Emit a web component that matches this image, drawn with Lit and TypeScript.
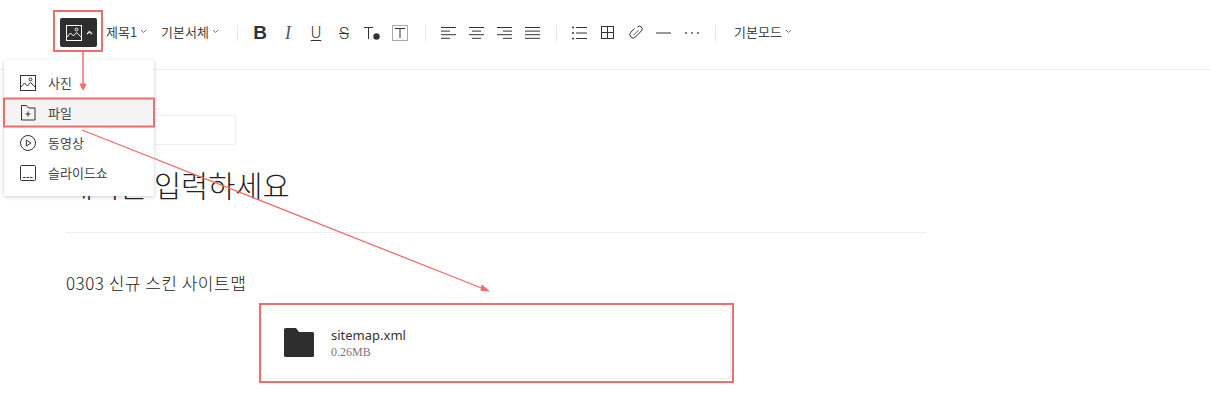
import { LitElement, html, css, svg } from "lit";
import { customElement } from "lit/decorators.js";

const chevron = html`<svg class="chev" width="7" height="5" viewBox="0 0 7 5"><path d="M1 1l2.5 2.5L6 1" fill="none" stroke="#666" stroke-width="0.9"/></svg>`;

const icon = (body: unknown, w = 16, h = 16) =>
  html`<svg class="icon" width=${w} height=${h} viewBox="0 0 ${w} ${h}" fill="none" stroke="#333" stroke-width="1">${body}</svg>`;

const imageIcon = (color: string) => html`<svg class="icon" width="16" height="16" viewBox="0 0 16 16" fill="none" stroke=${color} stroke-width="1">
  <rect x="0.5" y="0.5" width="15" height="15"/>
  <path d="M1 12l3.5-4 3 3 3-3.500 4.500 4.500"/>
  <circle cx="10.500" cy="4.500" r="1.400"/>
</svg>`;

const lines = (rows: [number, number][]) =>
  icon(rows.map(([a, b], i) => svg`<path d="M${a} ${2.5 + i * 3.6}H${b}"/>`), 16, 16);

@customElement("app-root")
export class AppRoot extends LitElement {
  static styles = css`
    :host {
      display: block;
      position: relative;
      width: 1210px;
      height: 417px;
      overflow: hidden;
      background: #fff;
      color: #222;
      font-family: "Noto Sans CJK KR", "Noto Sans", sans-serif;
    }

    .toolbar {
      display: flex;
      align-items: center;
      height: 69px;
      padding-left: 60px;
      border-bottom: 1px solid #efefef;
      font-size: 13px;
      color: #444;
    }

    .inner {
      display: flex;
      align-items: center;
      height: 29px;
      margin-top: -4px;
    }

    .img-btn {
      display: flex;
      align-items: center;
      gap: 4px;
      width: 37px;
      height: 29px;
      box-sizing: border-box;
      padding-left: 6px;
      background: #2e2e2e;
      border-radius: 2px;
    }

    .drop {
      display: flex;
      align-items: center;
      gap: 3px;
      margin-top: -2px;
      white-space: nowrap;
    }

    .chev {
      flex: none;
    }

    .heading {
      margin-left: 9px;
      width: 46px;
    }

    .font {
      margin-left: 9px;
      width: 66px;
    }

    .sep {
      width: 1px;
      height: 16px;
      background: #e6e6e6;
      flex: none;
    }

    .group {
      display: flex;
      align-items: center;
      gap: 12px;
      margin: 0 15px;
    }

    .style-group {
      margin: 0 17px 0 14px;
    }

    .mode {
      margin-left: 18px;
    }

    .icon {
      flex: none;
      display: block;
    }

    .glyph {
      width: 16px;
      text-align: center;
      line-height: 16px;
      color: #333;
    }

    .bold {
      font-family: "Liberation Sans", sans-serif;
      font-size: 19px;
      font-weight: 700;
    }

    .italic {
      font-family: "Liberation Serif", serif;
      font-size: 18px;
      font-style: italic;
      font-weight: 400;
      color: #555;
    }

    .under,
    .strike {
      font-family: Roboto, sans-serif;
      font-size: 16px;
      font-weight: 300;
    }

    .under {
      text-decoration: underline;
      text-decoration-thickness: 1px;
      text-underline-offset: 2px;
    }

    .strike {
      font-size: 17px;
      text-decoration: line-through;
      text-decoration-thickness: 1px;
    }

    .page {
      width: 860px;
      margin-left: 66px;
    }

    .subtitle {
      width: 168px;
      height: 28px;
      margin-top: 45px;
      border: 1px solid #eee;
    }

    h1 {
      margin: 19px 0 0;
      font-size: 29.500px;
      font-weight: 300;
      line-height: 40px;
      color: #222;
    }

    .rule {
      height: 1px;
      margin-top: 28px;
      background: #eee;
    }

    p {
      margin: 38px 0 0;
      font-size: 17px;
      font-weight: 300;
      line-height: 24px;
      letter-spacing: 0.500px;
      color: #222;
    }

    .file {
      display: flex;
      align-items: center;
      gap: 17px;
      width: 470px;
      height: 75px;
      box-sizing: border-box;
      margin: 9px auto 0;
      padding-left: 22px;
      border: 1px solid #eee;
    }

    .folder {
      flex: none;
      margin-top: 1px;
    }

    .file-name {
      font-family: "Noto Sans", sans-serif;
      font-size: 13px;
      line-height: 20px;
      color: #333;
    }

    .file-size {
      font-family: "Liberation Serif", serif;
      font-size: 12px;
      line-height: 14px;
      color: #777;
    }

    .menu {
      position: absolute;
      left: 4px;
      top: 60px;
      width: 150px;
      height: 136px;
      box-sizing: border-box;
      padding-top: 8px;
      background: #fff;
      box-shadow: 0 1px 4px rgba(0, 0, 0, 0.2);
      font-size: 13px;
      color: #444;
    }

    .menu::before {
      content: "";
      position: absolute;
      left: 74px;
      top: -5px;
      width: 10px;
      height: 10px;
      background: #fff;
      transform: rotate(45deg);
      box-shadow: -1px -1px 1px rgba(0, 0, 0, 0.06);
    }

    .menu-item {
      position: relative;
      display: flex;
      align-items: center;
      gap: 12px;
      height: 30px;
      padding-left: 16px;
    }

    .menu-label {
      margin-top: -2px;
    }

    .menu-item.active {
      background: #f4f4f4;
    }

    .marks {
      position: absolute;
      left: 0;
      top: 0;
      pointer-events: none;
    }
  `;

  render() {
    return html`
      <div class="toolbar">
        <div class="inner">
          <div class="img-btn">
            ${imageIcon("#fff")}
            <svg width="7" height="5" viewBox="0 0 7 5"><path d="M1 4l2.500-2.500L6 4" fill="none" stroke="#fff" stroke-width="1.200"/></svg>
          </div>
          <div class="drop heading">제목1${chevron}</div>
          <div class="drop font">기본서체${chevron}</div>
          <div class="sep" style="margin-left:10px"></div>
          <div class="group style-group">
            <span class="glyph bold">B</span>
            <span class="glyph italic">I</span>
            <span class="glyph under">U</span>
            <span class="glyph strike">S</span>
            ${icon(svg`<path d="M0 2.500h9M4.500 2.500V14"/><circle cx="12.500" cy="11.500" r="3.200" fill="#333" stroke="none"/>`)}
            ${icon(svg`<rect x="0.500" y="0.500" width="15" height="15" stroke="#aaa"/><path d="M3 3.500h10M8 3.500V13"/>`)}
          </div>
          <div class="sep"></div>
          <div class="group">
            ${lines([[0, 15], [0, 9], [0, 15], [0, 9]])}
            ${lines([[0, 15], [3, 12], [0, 15], [3, 12]])}
            ${lines([[0, 15], [6, 15], [0, 15], [6, 15]])}
            ${lines([[0, 15], [0, 15], [0, 15], [0, 15]])}
          </div>
          <div class="sep"></div>
          <div class="group">
            ${icon(svg`<circle cx="1" cy="2.500" r="1" fill="#333" stroke="none"/><circle cx="1" cy="8" r="1" fill="#333" stroke="none"/><circle cx="1" cy="13.500" r="1" fill="#333" stroke="none"/><path d="M4 2.500h11M4 8h11M4 13.500h11"/>`)}
            ${icon(svg`<rect x="1.500" y="1.500" width="12" height="12"/><path d="M7.500 1.500v12M1.500 7.500h12"/>`)}
            ${icon(svg`<path d="M6.500 3.500L2.800 7.300a3.300 3.300 0 0 0 4.700 4.700l6-6.200a2.700 2.700 0 0 0-4-3.700"/><path d="M5.500 10.200L10.500 5.200" stroke="#555"/>`)}
            ${icon(svg`<path d="M0 8h15"/>`)}
            ${icon(svg`<circle cx="2" cy="8" r="1" fill="#555" stroke="none"/><circle cx="8" cy="8" r="1" fill="#555" stroke="none"/><circle cx="14" cy="8" r="1" fill="#555" stroke="none"/>`)}
          </div>
          <div class="sep"></div>
          <div class="drop mode">기본모드${chevron}</div>
        </div>
      </div>

      <div class="page">
        <div class="subtitle"></div>
        <h1>제목을 입력하세요</h1>
        <div class="rule"></div>
        <p>0303 신규 스킨 사이트맵</p>
        <div class="file">
          <svg class="folder" width="30" height="29" viewBox="0 0 30 29"><path d="M0 1.500A1.500 1.500 0 0 1 1.500 0h10.500l3 4h13.500A1.500 1.500 0 0 1 30 5.500V27.500A1.500 1.500 0 0 1 28.500 29H1.500A1.500 1.500 0 0 1 0 27.500Z" fill="#2e2e2e"/></svg>
          <div>
            <div class="file-name">sitemap.xml</div>
            <div class="file-size">0.26MB</div>
          </div>
        </div>
      </div>

      <div class="menu">
        <div class="menu-item">${imageIcon("#333")}<span class="menu-label">사진</span></div>
        <div class="menu-item active">
          ${icon(svg`<path d="M1.500 0.500h5l2 2.500h6.500v12h-13.500zM8 6.500v5M5.500 9h5"/>`)}<span class="menu-label">파일</span>
        </div>
        <div class="menu-item">
          ${icon(svg`<circle cx="8" cy="8" r="7.500"/><path d="M6.300 5v6l4.700-3z"/>`)}<span class="menu-label">동영상</span>
        </div>
        <div class="menu-item">
          ${icon(svg`<rect x="0.500" y="0.500" width="15" height="15" rx="1"/><path d="M3 12.500h10" stroke-dasharray="2.500 1"/>`)}<span class="menu-label">슬라이드쇼</span>
        </div>
      </div>

      <svg class="marks" width="1210" height="417" fill="none" stroke="#ee6e6e">
        <rect x="54" y="11" width="48" height="40" stroke-width="2"/>
        <rect x="4" y="98.500" width="150" height="28" stroke-width="2"/>
        <rect x="260" y="304" width="473" height="78" stroke-width="2"/>
        <path d="M83 52V86" stroke-width="1.500"/>
        <path d="M80 84l3 6 3-6z" fill="#ee6e6e" stroke-width="1"/>
        <path d="M82 130L484 289" stroke-width="1.300"/>
        <path d="M482 285l7 6-8-.5z" fill="#ee6e6e" stroke-width="1"/>
      </svg>
    `;
  }
}
